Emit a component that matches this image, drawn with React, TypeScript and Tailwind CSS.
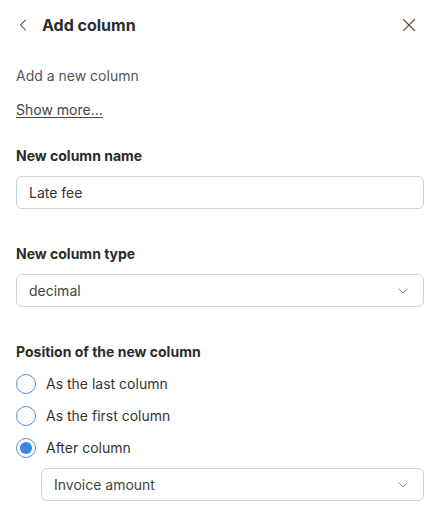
import { ChevronDown, ChevronLeft, X } from "lucide-react";

const options = ["As the last column", "As the first column", "After column"];

function Radio({ checked }: { checked: boolean }) {
  return (
    <span className="flex h-5 w-5 shrink-0 items-center justify-center rounded-full border-[1.5px] border-[#4a90e2] bg-white">
      {checked && <span className="h-3 w-3 rounded-full bg-[#3a86e0]" />}
    </span>
  );
}

export default function App() {
  const selected = 2;
  return (
    <div className="h-[514px] w-[434px] bg-white pl-4 pr-[10px] text-[#2b2b2b] [font-family:Inter,'Liberation_Sans',sans-serif]">
      <div className="flex h-[50px] items-center">
        <ChevronLeft className="-ml-[3px] h-5 w-5 text-[#3d3d3d]" strokeWidth={1.25} />
        <h1 className="ml-[9px] flex-1 text-base font-bold text-[#2b2b2b]">Add column</h1>
        <X className="mr-[4px] h-[22px] w-[22px] text-[#6b4a2e]" strokeWidth={1.25} />
      </div>

      <p className="mt-[16px] text-sm text-[#555]">Add a new column</p>
      <button className="mt-[14px] block text-sm text-[#444] underline underline-offset-2">Show more...</button>

      <label className="mt-[26px] block text-sm font-bold text-[#2b2b2b]">New column name</label>
      <div className="mt-[10px] flex h-[33px] items-center rounded-md border border-[#cfd3d8] px-3 text-sm text-[#333]">
        Late fee
      </div>

      <label className="mt-[35px] block text-sm font-bold text-[#2b2b2b]">New column type</label>
      <div className="mt-[10px] flex h-[33px] items-center justify-between rounded-md border border-[#cfd3d8] px-3 text-sm text-[#444]">
        <span>decimal</span>
        <ChevronDown className="h-4 w-4 text-[#777]" strokeWidth={1.25} />
      </div>

      <label className="mt-[35px] block text-sm font-bold text-[#2b2b2b]">Position of the new column</label>
      <div className="mt-[12px] flex flex-col gap-3">
        {options.map((o, i) => (
          <div key={o} className="flex h-5 items-center gap-[10px] text-sm text-[#333]">
            <Radio checked={i === selected} />
            <span>{o}</span>
          </div>
        ))}
      </div>
      <div className="ml-[25px] mt-[10px] flex h-[33px] items-center justify-between rounded-md border border-[#cfd3d8] px-3 text-sm text-[#444]">
        <span>Invoice amount</span>
        <ChevronDown className="h-4 w-4 text-[#777]" strokeWidth={1.25} />
      </div>
    </div>
  );
}
